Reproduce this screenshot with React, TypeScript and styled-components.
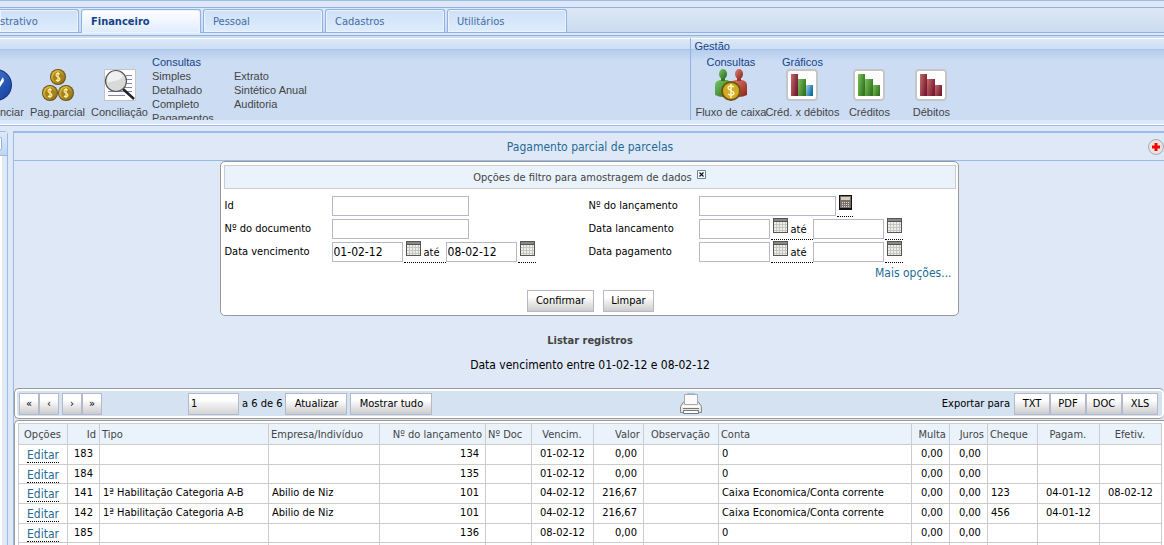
import React from "react";
import styled, { createGlobalStyle, css } from "styled-components";

const tahoma = '"DejaVu Sans Condensed", "Noto Sans", sans-serif';
const arial = '"Liberation Sans", sans-serif';

const Global = createGlobalStyle`
  * { box-sizing: border-box; }
  body { margin: 0; background: #dfe8f6; font: 11px/14px ${tahoma}; color: #000; overflow: hidden; height: 100vh; }
  a { text-decoration: none; color: #236b96; }
  svg { display: block; flex: none; }
`;

const TopBand = styled.div`
  height: 8px;
  border-top: 1px solid #99bbe8;
  border-bottom: 1px solid #8db2e3;
`;

const TabStrip = styled.nav`
  display: flex;
  gap: 2px;
  height: 25px;
  padding-top: 1px;
  background: linear-gradient(#dde8f5, #cbdbef);
  border-bottom: 1px solid #8db2e3;
`;

const Tab = styled.a<{ $active?: boolean; $cut?: boolean }>`
  width: ${(p) => (p.$cut ? 79 : 120)}px;
  height: 23px;
  padding: 0 9px;
  line-height: 24px;
  color: #416da3;
  background: linear-gradient(#cfe0f7, #deecfd);
  border: 1px solid #8db2e3;
  border-bottom: 0;
  border-radius: 3px 3px 0 0;
  box-shadow: inset 0 0 0 1px #eaf3fe;
  ${(p) => p.$cut && css`padding: 0; border-left: 0; border-radius: 0 3px 0 0;`}
  ${(p) => p.$active && css`
    height: 24px;
    color: #15428b;
    font-weight: bold;
    background: linear-gradient(#ffffff, #deecfd);
  `}
`;

const Ribbon = styled.section`
  display: flex;
  height: 91px;
  margin-top: 2px;
  border-top: 1px solid #8db2e3;
  border-bottom: 1px solid #99bbe8;
  background: #cddef3;
  box-shadow: inset 0 -1px #fff, inset 0 -5px #dfe8f6;
  padding: 2px 0 5px;
`;

const Group = styled.div<{ $grow: number; $divided?: boolean }>`
  flex: ${(p) => p.$grow} 1 0;
  min-width: 0;
  overflow: hidden;
  font-family: ${arial};
  color: #444;
  background: linear-gradient(#b6cdee, #ccddf3 12px) 0 12px no-repeat #ccddf3;
  ${(p) => p.$divided && css`border-left: 1px solid #8db2e3;`}
`;

const GroupHead = styled.div`
  height: 12px;
  padding-left: 3px;
  line-height: 15px;
  color: #15428b;
  border-top: 1px solid #fff;
  border-bottom: 1px solid #aac5ea;
  background: linear-gradient(#dce8f6, #cddff3);
`;

const Actions = styled.div<{ $columns: string; $indent?: boolean }>`
  display: grid;
  grid-template-columns: ${(p) => p.$columns};
  height: 70px;
  padding: 5px 0 0 ${(p) => (p.$indent ? 4 : 0)}px;
`;

const Action = styled.button<{ $start?: boolean }>`
  display: flex;
  flex-direction: column;
  align-items: ${(p) => (p.$start ? "flex-start" : "center")};
  height: 65px;
  padding: 0;
  border: 0;
  background: none;
  font: 11px/14px ${arial};
  color: #444;
  white-space: nowrap;
  b { font-weight: normal; color: #15428b; height: 14px; }
  svg { margin-bottom: 4px; }
`;

const LinkList = styled.div`
  display: flex;
  flex-direction: column;
  line-height: 14px;
  white-space: nowrap;
  a { color: #444; }
  b { font-weight: normal; color: #15428b; height: 14px; flex: none; }
`;

const Body = styled.div`
  display: flex;
  gap: 5px;
  padding-top: 5px;
`;

const SidePanel = styled.aside`
  flex: none;
  width: 8px;
  height: 440px;
  border: 1px solid #99bbe8;
  border-left: 0;
  border-radius: 0 4px 0 0;
  background: linear-gradient(90deg, #fff 2px, #dfe8f6 2px);
`;

const SideHead = styled.div`
  height: 24px;
  padding: 5px 5px 0 0;
  border-bottom: 1px solid #99bbe8;
  background: linear-gradient(#dde9f8, #c3d6ef);
  div { height: 13px; background: #fff; border: 1px solid #8db2e3; border-left: 0; border-radius: 0 2px 2px 0; }
`;

const Main = styled.main`
  flex: 1;
  min-width: 0;
  border-left: 1px solid #99bbe8;
  border-top: 2px solid #99bbe8;
`;

const TitleBar = styled.header`
  display: grid;
  grid-template-columns: 18px 1fr 16px;
  align-items: center;
  height: 28px;
  border-bottom: 1px solid #99bbe8;
  h1 { margin: 0; font-size: 12px; font-weight: normal; line-height: 16px; text-align: center; color: #236b96; grid-column: 2; }
`;

const FilterPanel = styled.form`
  width: 739px;
  max-width: 100%;
  margin: 0 auto;
  padding: 3px 2px 3px 3px;
  background: #fff;
  border: 1px solid #999;
  border-radius: 5px;
`;

const FilterHead = styled.div`
  display: flex;
  justify-content: center;
  gap: 5px;
  height: 24px;
  line-height: 24px;
  color: #444;
  background: #eaf3fc;
  border: 1px solid #ccc;
`;

const CloseButton = styled.button`
  width: 9px;
  height: 9px;
  margin-top: 4px;
  padding: 0;
  border: 0;
  background: none;
`;

const Fields = styled.div`
  display: grid;
  grid-template-columns: 107px 257px 110px 1fr;
  grid-auto-rows: 23px;
  align-items: center;
  padding: 5px 0 0 1px;
`;

const FieldLine = styled.div`
  display: flex;
  align-items: center;
`;

const TextBox = styled.input<{ $w: number }>`
  width: ${(p) => p.$w}px;
  height: 20px;
  padding: 1px 1px 0;
  border: 1px solid #b5b8c8;
  background: #fff;
  font: 12px/16px ${tahoma};
  color: #000;
`;

const Picker = styled.a<{ $joined?: boolean }>`
  display: flex;
  align-items: flex-end;
  height: 22px;
  margin-left: 1px;
  padding: 0 ${(p) => (p.$joined ? 6 : 1)}px 2px 2px;
  border-bottom: 1px dotted #000;
  color: #000;
  gap: 3px;
  svg { align-self: flex-start; }
`;

const More = styled.div`
  padding: 2px 4px 0 0;
  font-size: 12px;
  line-height: 16px;
  text-align: right;
`;

const FormButtons = styled.div`
  display: flex;
  justify-content: center;
  gap: 9px;
  padding: 9px 0 0 2px;
`;

const Button = styled.button<{ $w: number }>`
  width: ${(p) => p.$w}px;
  height: 22px;
  padding: 0;
  border: 1px solid #b5b8c8;
  background: linear-gradient(#fff 30%, #f0f0f0 50%, #ccc);
  font: 11px/16px ${tahoma};
  color: #000;
`;

const Summary = styled.div`
  padding: 17px 0 15px 2px;
  text-align: center;
  line-height: 16px;
  h2 { margin: 0 0 8px; font-size: 11px; line-height: 16px; color: #444; }
  p { margin: 0; font-size: 12px; }
`;

const Toolbar = styled.div`
  display: flex;
  align-items: center;
  height: 31px;
  margin-bottom: 1px;
  padding: 0 6px 0 4px;
  background: #d5e2f2;
  border: 1px solid #999;
  border-right: 0;
  border-radius: 5px;
  box-shadow: inset 0 0 0 2px #fff;
`;

const Cluster = styled.div<{ $gap?: number; $left?: number; $end?: boolean }>`
  display: flex;
  align-items: center;
  gap: ${(p) => p.$gap ?? 0}px;
  margin-left: ${(p) => p.$left ?? 0}px;
  ${(p) => p.$end && css`flex: 1; justify-content: flex-end;`}
`;

const PageBox = styled(TextBox)`
  height: 22px;
  padding: 1px 2px;
  background: linear-gradient(#fff 30%, #f0f0f0 50%, #d4d4d4);
  font-size: 11px;
`;

const PrintButton = styled.button`
  margin-left: 248px;
  padding: 0;
  border: 0;
  background: none;
`;

const GridPanel = styled.div`
  padding: 2px 2px 0 3px;
  background: #fff;
  border: 1px solid #999;
  border-right: 0;
  border-radius: 5px 0 0 0;
`;

const Table = styled.table`
  width: 100%;
  table-layout: fixed;
  border-collapse: collapse;
  white-space: nowrap;
  tbody tr { height: 20px; }
  tbody tr:nth-child(3n + 2) { height: 19px; }
`;

const Th = styled.th<{ $align?: string }>`
  height: 21px;
  padding: 1px 3px 0 2px;
  font-weight: normal;
  color: #444;
  background: #eaf3fc;
  border: 1px solid #ccc;
  text-align: ${(p) => p.$align ?? "left"};
`;

const Td = styled.td<{ $align?: string }>`
  padding: 2px 6px 0 3px;
  line-height: 14px;
  vertical-align: top;
  border: 1px solid #ccc;
  text-align: ${(p) => p.$align ?? "left"};
  ${(p) => p.$align === "center" && css`padding-left: 2px; padding-right: 2px;`}
`;

const EditLink = styled.a`
  display: block;
  width: 32px;
  height: 16px;
  margin: 0 auto;
  font-size: 12px;
  line-height: 17px;
  border-bottom: 1px dotted #000;
`;

const CheckIcon = () => (
  <svg width="12" height="32" viewBox="0 0 12 32">
    <defs>
      <linearGradient id="check" x2="1" y2="1">
        <stop stopColor="#4a7fd6" />
        <stop offset="1" stopColor="#143f9e" />
      </linearGradient>
    </defs>
    <circle cx="-4" cy="16" r="16" fill="#17327c" />
    <circle cx="-4" cy="16" r="15" fill="url(#check)" />
    <path d="M-8 16l3 5L3 8l1 4-8 12z" fill="#fff" />
  </svg>
);

const Coin = ({ x, y }: { x: number; y: number }) => (
  <g transform={`translate(${x} ${y})`}>
    <circle r="8" fill="#6b4f0d" />
    <circle r="7" fill="url(#gold)" />
    <circle r="5" fill="#a8811b" />
    <path d="M2-3C0-4-2-4-2-2S2 0 2 2-1 4-2 3M0-5V5" fill="none" stroke="#fff2a0" strokeWidth="1.2" />
  </g>
);

const CoinsIcon = () => (
  <svg width="32" height="32" viewBox="0 0 32 32">
    <defs>
      <linearGradient id="gold" x2="1" y2="1">
        <stop stopColor="#ecd04c" />
        <stop offset="1" stopColor="#80600f" />
      </linearGradient>
    </defs>
    <Coin x={16} y={8} />
    <Coin x={8} y={24} />
    <Coin x={24} y={24} />
  </svg>
);

const SearchIcon = () => (
  <svg width="32" height="32" viewBox="0 0 32 32">
    <path d="M.5.5h31v31H.5z" fill="#fff" stroke="#c4c4c4" />
    <path d="M22 6.500h6M23 10.500h5M23 14.500h5M21 18.500h7M4 22.500h24M4 26.500h17" stroke="#7f87b0" />
    <path d="M19 20l11 10" stroke="#222" strokeWidth="2.5" />
    <circle cx="12" cy="12" r="10.5" fill="#d9d9d9" stroke="#555" strokeWidth="1.2" />
    <path d="M4 14a8 8 0 0 1 15-7C15 13 9 11 4 14z" fill="#f1f1f1" />
  </svg>
);

const PeopleIcon = () => (
  <svg width="32" height="32" viewBox="0 0 32 32">
    <defs>
      <linearGradient id="pGreen" x2="1" y2="1">
        <stop stopColor="#7cc566" />
        <stop offset="1" stopColor="#226a18" />
      </linearGradient>
      <linearGradient id="pRed" x2="1" y2="1">
        <stop stopColor="#dd8578" />
        <stop offset="1" stopColor="#8e1d16" />
      </linearGradient>
    </defs>
    <path d="M0 26V16q0-4 5-5h7q4 1 4 6v9q-8 4-16 0z" fill="url(#pGreen)" />
    <path d="M16 26v-9q0-5 4-6h7q5 1 5 5v10q-8 4-16 0z" fill="url(#pRed)" />
    <path d="M6 9h4v3H6z" fill="#2f7a24" />
    <path d="M22 9h4v3h-4z" fill="#9b3128" />
    <ellipse cx="8" cy="5" rx="4" ry="5" fill="url(#pGreen)" />
    <ellipse cx="24" cy="5" rx="4" ry="5" fill="url(#pRed)" />
    <circle cx="16" cy="22" r="10" fill="#76530f" />
    <circle cx="16" cy="22" r="8" fill="#cfac25" />
    <path d="M19 18c-3-2-6-1-6 1s6 3 6 5-3 3-6 1M16 15v14" fill="none" stroke="#fff6c4" strokeWidth="1.5" />
  </svg>
);

const palette: Record<string, [string, string]> = {
  red: ["#c66d69", "#761b32"],
  green: ["#79c45a", "#367421"],
  blue: ["#a8cfe5", "#086da2"],
};

const ChartIcon = ({ name, bars }: { name: string; bars: string[] }) => (
  <svg width="32" height="32" viewBox="0 0 32 32">
    <defs>
      {bars.map((b, i) => (
        <linearGradient key={i} id={`${name}${i}`} x2="1" y2=".5">
          <stop stopColor={palette[b][0]} />
          <stop offset="1" stopColor={palette[b][1]} />
        </linearGradient>
      ))}
    </defs>
    <rect x="1" y="1" width="30" height="30" rx="3" fill="#fff" stroke="#c6c6c6" strokeWidth="2" />
    {[[5, 5, 7], [12, 10, 8], [20, 16, 7]].map(([x, y, w], i) => (
      <rect key={i} x={x} y={y} width={w} height={27 - y} fill={`url(#${name}${i})`} />
    ))}
  </svg>
);

const CalendarIcon = () => (
  <svg width="15" height="15" viewBox="0 0 15 15" shapeRendering="crispEdges">
    <path d="M0 0h15v15H0z" fill="#555" />
    <path d="M1 1h13v2H1z" fill="#888" />
    <path d="M1 4h13v10H1z" fill="#efefea" />
    <path d="M3.5 4v10M6.5 4v10M9.5 4v10M12.5 4v10M1 6.5h13M1 9.5h13M1 12.5h13" stroke="#c6c6c0" />
  </svg>
);

const CalculatorIcon = () => (
  <svg width="13" height="15" viewBox="0 0 13 15" shapeRendering="crispEdges">
    <path d="M0 0h13v15H0z" fill="#111" />
    <path d="M1 1h11v12H1z" fill="#776f69" />
    <path d="M2 2h9v3H2z" fill="#d8cdbc" />
    <path d="M3 7.5h8M3 9.5h8M3 11.5h8" stroke="#ddd" strokeDasharray="1 1" />
  </svg>
);

const CloseIcon = () => (
  <svg width="9" height="9" viewBox="0 0 9 9">
    <path d="M.5.5h8v8h-8z" fill="#fff" stroke="#5b87a5" />
    <path d="M2.500 2.500l4 4m0-4l-4 4" stroke="#111" strokeWidth="1.2" />
  </svg>
);

const PlusIcon = () => (
  <svg width="16" height="16" viewBox="0 0 16 16">
    <circle cx="8" cy="8" r="7.5" fill="#e4e4e4" stroke="#aaa" />
    <path d="M6.5 4h3v2.500H12v3H9.500V12h-3V9.500H4v-3h2.500z" fill="#f00" />
  </svg>
);

const PrinterIcon = () => (
  <svg width="22" height="22" viewBox="0 0 22 22">
    <path d="M7 1q4-2 8 0" fill="none" stroke="#8eb4db" />
    <path d="M.5 19.500v-6l3-4.500h15l3 4.500v6z" fill="#e6e6e2" stroke="#888" />
    <path d="M4.500 11.500v-10h13v10z" fill="#fafafa" stroke="#aaa" />
    <path d="M2 13.500h18" stroke="#fff" strokeWidth="2" />
    <path d="M3 15.500h16" stroke="#777" />
    <path d="M3.500 17.500h15v3h-15z" fill="#fff" stroke="#777" />
  </svg>
);

const columns: { label: string; w: number; align?: string }[] = [
  { label: "Opções", w: 49, align: "center" },
  { label: "Id", w: 32, align: "right" },
  { label: "Tipo", w: 169 },
  { label: "Empresa/Indivíduo", w: 111 },
  { label: "Nº do lançamento", w: 106, align: "right" },
  { label: "Nº Doc", w: 46 },
  { label: "Vencim.", w: 62, align: "center" },
  { label: "Valor", w: 50, align: "right" },
  { label: "Observação", w: 75, align: "center" },
  { label: "Conta", w: 193 },
  { label: "Multa", w: 38, align: "right" },
  { label: "Juros", w: 38, align: "right" },
  { label: "Cheque", w: 50 },
  { label: "Pagam.", w: 62, align: "center" },
  { label: "Efetiv.", w: 62, align: "center" },
];
const totalWidth = columns.reduce((sum, c) => sum + c.w, 0);

const license = ["1ª Habilitação Categoria A-B", "Abilio de Niz", "101", "", "04-02-12", "216,67", "", "Caixa Economica/Conta corrente", "0,00", "0,00"];
const rows: string[][] = [
  ["183", "", "", "134", "", "01-02-12", "0,00", "", "0", "0,00", "0,00", "", "", ""],
  ["184", "", "", "135", "", "01-02-12", "0,00", "", "0", "0,00", "0,00", "", "", ""],
  ["141", ...license, "123", "04-01-12", "08-02-12"],
  ["142", ...license, "456", "04-01-12", ""],
  ["185", "", "", "136", "", "08-02-12", "0,00", "", "0", "0,00", "0,00", "", "", ""],
];

const DateRange = ({ id, from = "", to = "" }: { id: string; from?: string; to?: string }) => (
  <FieldLine>
    <TextBox $w={71} id={id} defaultValue={from} />
    <Picker href="#" $joined><CalendarIcon />até</Picker>
    <TextBox $w={71} aria-label="até" defaultValue={to} />
    <Picker href="#" aria-label="Calendário"><CalendarIcon /></Picker>
  </FieldLine>
);

export default function App() {
  return (
    <>
      <Global />
      <TopBand />
      <TabStrip>
        <Tab href="#" $cut>strativo</Tab>
        <Tab href="#" $active>Financeiro</Tab>
        <Tab href="#">Pessoal</Tab>
        <Tab href="#">Cadastros</Tab>
        <Tab href="#">Utilitários</Tab>
      </TabStrip>
      <Ribbon>
        <Group $grow={691}>
          <GroupHead />
          <Actions $columns="28px 59px 65px 82px 1fr">
            <Action $start><b /><CheckIcon />nciar</Action>
            <Action><b /><CoinsIcon />Pag.parcial</Action>
            <Action><b /><SearchIcon />Conciliação</Action>
            <LinkList>
              <b>Consultas</b>
              <a href="#">Simples</a>
              <a href="#">Detalhado</a>
              <a href="#">Completo</a>
              <a href="#">Pagamentos</a>
            </LinkList>
            <LinkList>
              <b />
              <a href="#">Extrato</a>
              <a href="#">Sintético Anual</a>
              <a href="#">Auditoria</a>
            </LinkList>
          </Actions>
        </Group>
        <Group $grow={473} $divided>
          <GroupHead>Gestão</GroupHead>
          <Actions $columns="71px 72px 62px 62px" $indent>
            <Action><b>Consultas</b><PeopleIcon />Fluxo de caixa</Action>
            <Action><b>Gráficos</b><ChartIcon name="mix" bars={["red", "green", "blue"]} />Créd. x débitos</Action>
            <Action><b /><ChartIcon name="cred" bars={["green", "green", "green"]} />Créditos</Action>
            <Action><b /><ChartIcon name="deb" bars={["red", "red", "red"]} />Débitos</Action>
          </Actions>
        </Group>
      </Ribbon>
      <Body>
        <SidePanel><SideHead><div /></SideHead></SidePanel>
        <Main>
          <TitleBar>
            <h1>Pagamento parcial de parcelas</h1>
            <PlusIcon />
          </TitleBar>
          <FilterPanel>
            <FilterHead>
              Opções de filtro para amostragem de dados
              <CloseButton type="button" aria-label="Fechar"><CloseIcon /></CloseButton>
            </FilterHead>
            <Fields>
              <label htmlFor="id">Id</label>
              <FieldLine><TextBox $w={137} id="id" /></FieldLine>
              <label htmlFor="lanc">Nº do lançamento</label>
              <FieldLine>
                <TextBox $w={137} id="lanc" />
                <Picker href="#" aria-label="Calculadora"><CalculatorIcon /></Picker>
              </FieldLine>
              <label htmlFor="doc">Nº do documento</label>
              <FieldLine><TextBox $w={137} id="doc" /></FieldLine>
              <label htmlFor="dlanc">Data lancamento</label>
              <DateRange id="dlanc" />
              <label htmlFor="dvenc">Data vencimento</label>
              <DateRange id="dvenc" from="01-02-12" to="08-02-12" />
              <label htmlFor="dpag">Data pagamento</label>
              <DateRange id="dpag" />
            </Fields>
            <More><a href="#">Mais opções...</a></More>
            <FormButtons>
              <Button type="button" $w={67}>Confirmar</Button>
              <Button type="button" $w={51}>Limpar</Button>
            </FormButtons>
          </FilterPanel>
          <Summary>
            <h2>Listar registros</h2>
            <p>Data vencimento entre 01-02-12 e 08-02-12</p>
          </Summary>
          <Toolbar>
            <Cluster $gap={3}>
              <Cluster><Button $w={20}>«</Button><Button $w={20}>‹</Button></Cluster>
              <Cluster><Button $w={20}>›</Button><Button $w={20}>»</Button></Cluster>
            </Cluster>
            <Cluster $gap={3} $left={86}>
              <PageBox $w={51} id="start" defaultValue="1" />
              <label htmlFor="start">a 6 de 6</label>
              <Button $w={62}>Atualizar</Button>
              <Button $w={82}>Mostrar tudo</Button>
            </Cluster>
            <PrintButton aria-label="Imprimir"><PrinterIcon /></PrintButton>
            <Cluster $end>
              <Cluster $gap={4}>
                Exportar para
                <Cluster>
                  <Button $w={36}>TXT</Button>
                  <Button $w={36}>PDF</Button>
                  <Button $w={36}>DOC</Button>
                  <Button $w={36}>XLS</Button>
                </Cluster>
              </Cluster>
            </Cluster>
          </Toolbar>
          <GridPanel>
            <Table>
              <colgroup>
                {columns.map((c) => (
                  <col key={c.label} style={{ width: `${(c.w / totalWidth) * 100}%` }} />
                ))}
              </colgroup>
              <thead>
                <tr>{columns.map((c) => <Th key={c.label} $align={c.align}>{c.label}</Th>)}</tr>
              </thead>
              <tbody>
                {rows.map((r) => (
                  <tr key={r[0]}>
                    <Td $align="center"><EditLink href="#">Editar</EditLink></Td>
                    {r.map((v, i) => <Td key={i} $align={columns[i + 1].align}>{v}</Td>)}
                  </tr>
                ))}
                <tr>{columns.map((c) => <Td key={c.label} />)}</tr>
              </tbody>
            </Table>
          </GridPanel>
        </Main>
      </Body>
    </>
  );
}
